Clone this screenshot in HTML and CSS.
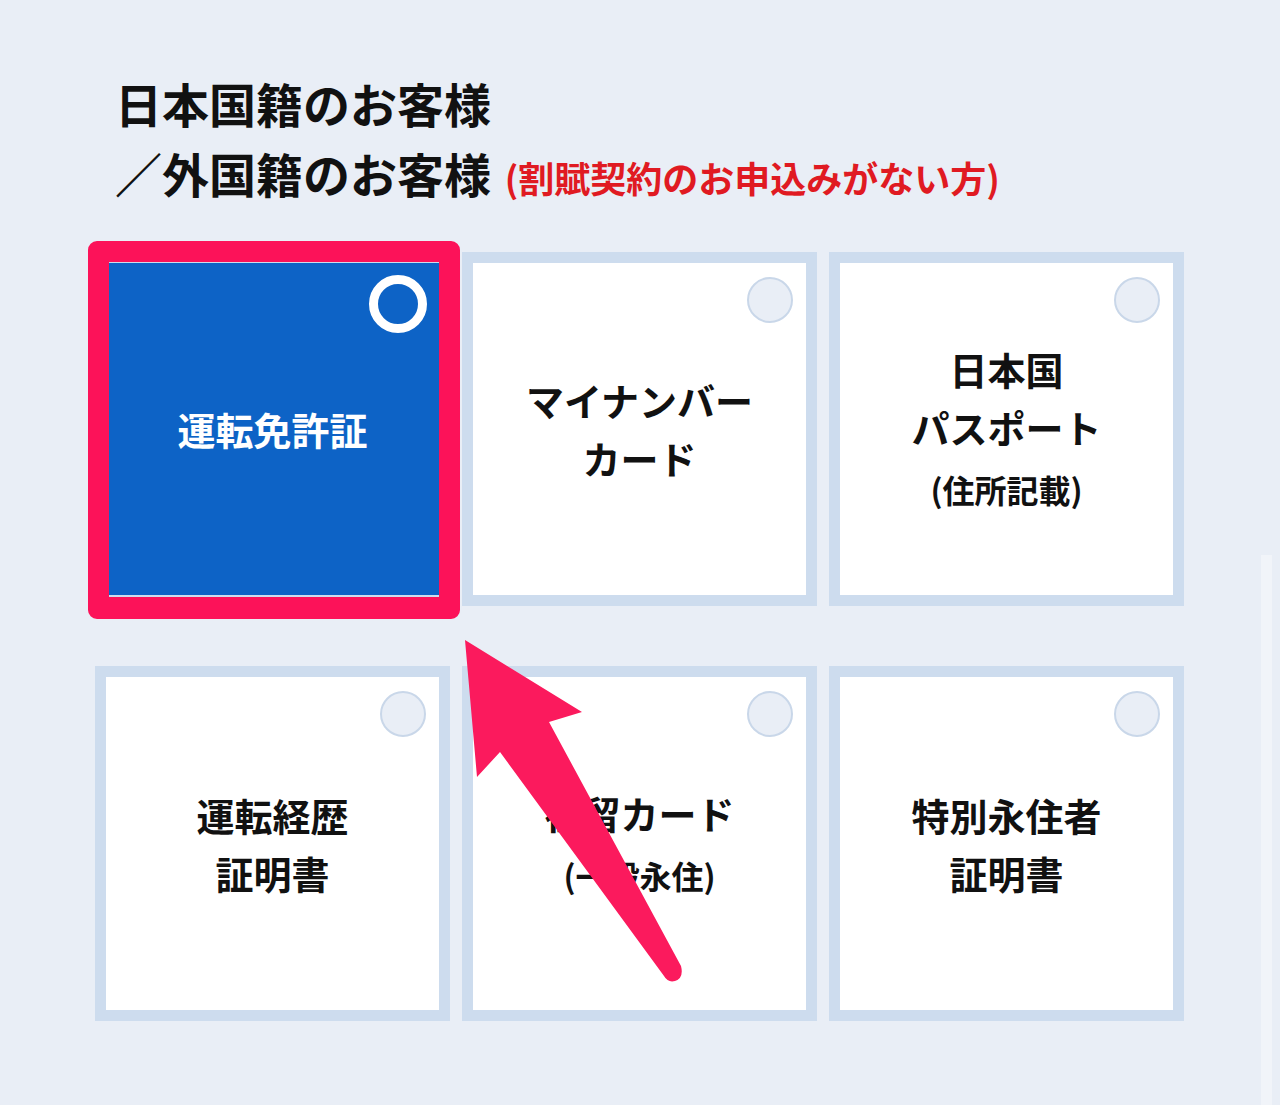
FILE: index.html
```html
<!DOCTYPE html>
<html lang="ja">
<head>
<meta charset="utf-8">
<title>本人確認書類の選択</title>
<link rel="stylesheet" href="styles.css">
</head>
<body>
<main class="page">
  <h1 class="title">
    <span class="title-line">日本国籍のお客様</span>
    <span class="title-line">／外国籍のお客様 <span class="note">(割賦契約のお申込みがない方)</span></span>
  </h1>

  <div class="grid">
    <div class="card selected">
      <span class="radio"></span>
      <div class="label"><span class="line">運転免許証</span></div>
    </div>
    <div class="card">
      <span class="radio"></span>
      <div class="label"><span class="line">マイナンバー</span><span class="line">カード</span></div>
    </div>
    <div class="card">
      <span class="radio"></span>
      <div class="label"><span class="line">日本国</span><span class="line">パスポート</span><span class="line sub">(住所記載)</span></div>
    </div>
    <div class="card">
      <span class="radio"></span>
      <div class="label"><span class="line">運転経歴</span><span class="line">証明書</span></div>
    </div>
    <div class="card">
      <span class="radio"></span>
      <div class="label"><span class="line">在留カード</span><span class="line sub">(一般永住)</span></div>
    </div>
    <div class="card">
      <span class="radio"></span>
      <div class="label"><span class="line">特別永住者</span><span class="line">証明書</span></div>
    </div>
  </div>

  <div class="highlight"></div>
  <svg class="arrow" viewBox="0 0 1280 1105" width="1280" height="1105" aria-hidden="true">
    <path d="M465 640 L582 712 L549 722 L681 966 Q684 978 675 981 Q668 983 664 976 L500 752 L477 777 Z" fill="#fb1a5d"/>
  </svg>
  <div class="scroll-track"></div>
</main>
</body>
</html>
```

FILE: styles.css
```css
html, body {
  margin: 0;
  padding: 0;
}

body {
  background: #e9eef6;
  font-family: "Noto Sans CJK JP", "Noto Sans", sans-serif;
  color: #111;
}

.page {
  position: relative;
  width: 1280px;
  height: 1105px;
  overflow: hidden;
}

.title {
  margin: 0;
  padding: 68px 0 0 115px;
  font-size: 47px;
  font-weight: 700;
  line-height: 70px;
  letter-spacing: 0;
}

.title-line {
  display: block;
  white-space: nowrap;
}

.note {
  font-size: 36px;
  font-weight: 700;
  color: #e01a22;
  margin-left: 3px;
}

.grid {
  display: grid;
  grid-template-columns: repeat(3, 355px);
  grid-template-rows: 354px 355px;
  column-gap: 12px;
  row-gap: 60px;
  margin: 40px 0 0 95px;
}

.card {
  position: relative;
  box-sizing: border-box;
  border: 11px solid #cddcee;
  background: #ffffff;
  display: flex;
  align-items: center;
  justify-content: center;
}

.card.selected {
  background: #0d63c6;
  color: #ffffff;
}

.label {
  display: flex;
  flex-direction: column;
  align-items: center;
  font-size: 38px;
  font-weight: 700;
  line-height: 58px;
  text-align: center;
}

.line {
  display: block;
  white-space: nowrap;
}

.line.sub {
  font-size: 32px;
  margin-top: 4px;
}

.radio {
  position: absolute;
  top: 14px;
  right: 13px;
  width: 46px;
  height: 46px;
  box-sizing: border-box;
  border-radius: 50%;
  border: 2px solid #c9d7e9;
  background: #e9eef6;
}

.card.selected .radio {
  top: 12px;
  right: 12px;
  width: 58px;
  height: 58px;
  border: 9px solid #ffffff;
  background: transparent;
}

.highlight {
  position: absolute;
  left: 88px;
  top: 241px;
  width: 372px;
  height: 378px;
  box-sizing: border-box;
  border: 21px solid #fc1259;
  border-bottom-width: 22px;
  border-radius: 9px;
}

.arrow {
  position: absolute;
  left: 0;
  top: 0;
  pointer-events: none;
}

.scroll-track {
  position: absolute;
  left: 1261px;
  top: 555px;
  width: 11px;
  height: 550px;
  background: #f1f4f9;
}
```
